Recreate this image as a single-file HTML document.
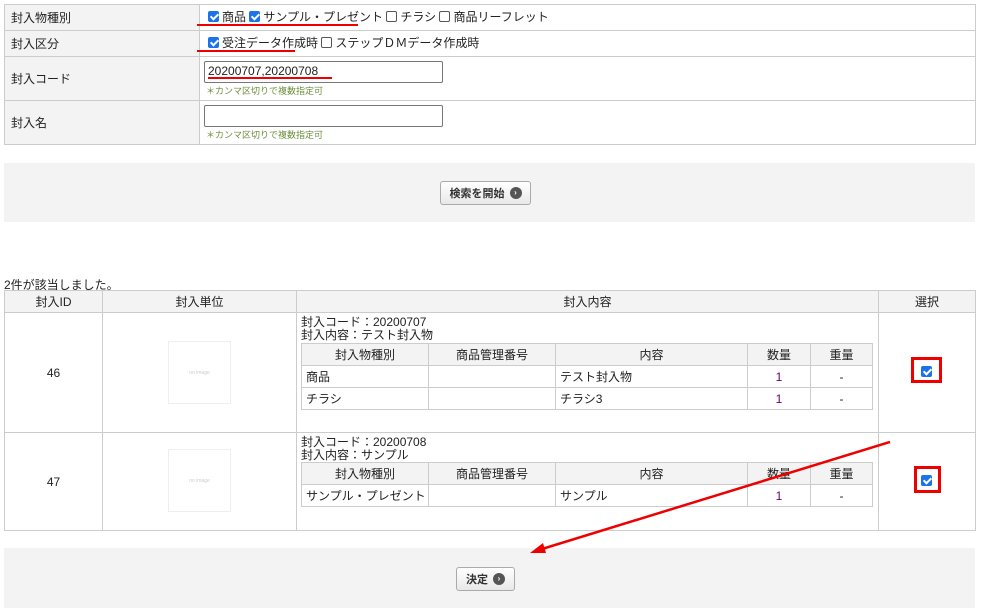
<!DOCTYPE html><html><head><meta charset="utf-8"><style>
*{box-sizing:border-box;margin:0;padding:0}
body{width:981px;height:614px;background:#fff;font-family:"Liberation Sans","Noto Sans CJK JP",sans-serif;font-size:12px;color:#222;position:relative;overflow:hidden}
.a{position:absolute}
.lbl{background:#f3f3f3;border:1px solid #ccc}
.cell{border:1px solid #ccc}
.cb{display:inline-block;width:11px;height:11px;border:1px solid #555;border-radius:2px;vertical-align:-1px;margin-right:3px;background:#fff}
.cb.on{background:#1a73e8;border-color:#1a73e8;position:relative}
.cb.on:after{content:"";position:absolute;left:3px;top:0px;width:3px;height:6px;border:solid #fff;border-width:0 2px 2px 0;transform:rotate(45deg)}
.note{color:#6b8e3a;font-size:9px}
.btn{border:1px solid #aaa;border-radius:3px;background:linear-gradient(#fff,#e8e8e8);font-size:11px;display:flex;align-items:center;justify-content:center;gap:5px;font-weight:bold;color:#333}
.ic{width:12px;height:12px;border-radius:50%;background:#555;color:#fff;font-size:8px;line-height:12px;text-align:center}
table{border-collapse:collapse;position:absolute;font-size:12px}
table.f{table-layout:fixed}
td{border:1px solid #ccc;height:22px;padding:0 4px;white-space:nowrap;overflow:hidden}
th{border:1px solid #ccc;background:#f3f3f3;font-weight:normal;height:22px}
.c{text-align:center}
.n{color:#606}
.ph{border:1px solid #eee;font-size:5px;color:#ccc;text-align:center;display:flex;align-items:center;justify-content:center}
</style></head><body>
<div class="a lbl" style="left:4px;top:4px;width:196px;height:27px;padding:4px 6px">封入物種別</div>
<div class="a cell" style="left:199px;top:4px;width:777px;height:27px;padding:3px 8px"><span class="cb on"></span>商品 <span class="cb on"></span>サンプル・プレゼント <span class="cb"></span>チラシ <span class="cb"></span>商品リーフレット</div>
<div class="a lbl" style="left:4px;top:30px;width:196px;height:27px;padding:4px 6px">封入区分</div>
<div class="a cell" style="left:199px;top:30px;width:777px;height:27px;padding:3px 8px"><span class="cb on"></span>受注データ作成時 <span class="cb"></span>ステップＤＭデータ作成時</div>
<div class="a lbl" style="left:4px;top:56px;width:196px;height:45px;padding:13px 6px">封入コード</div>
<div class="a cell" style="left:199px;top:56px;width:777px;height:45px"></div>
<div class="a" style="left:204px;top:61px;width:239px;height:22px;border:1px solid #777;border-radius:2px;padding:2px 3px;font-size:12px">20200707,20200708</div>
<div class="a note" style="left:206px;top:84px">＊カンマ区切りで複数指定可</div>
<div class="a lbl" style="left:4px;top:100px;width:196px;height:45px;padding:13px 6px">封入名</div>
<div class="a cell" style="left:199px;top:100px;width:777px;height:45px"></div>
<div class="a" style="left:204px;top:105px;width:239px;height:22px;border:1px solid #777;border-radius:2px"></div>
<div class="a note" style="left:206px;top:128px">＊カンマ区切りで複数指定可</div>
<div class="a" style="left:197px;top:24px;width:161px;height:2px;background:#e00"></div>
<div class="a" style="left:197px;top:50px;width:98px;height:2px;background:#e00"></div>
<div class="a" style="left:208px;top:77px;width:124px;height:2px;background:#e00"></div>

<div class="a" style="left:4px;top:163px;width:971px;height:59px;background:#f3f3f3"></div>
<div class="a btn" style="left:440px;top:181px;width:91px;height:24px">検索を開始<span class="ic">›</span></div>

<div class="a" style="left:4px;top:276px">2件が該当しました。</div>
<table style="left:4px;top:290px;width:972px">
<tr><th style="width:98px">封入ID</th><th style="width:194px">封入単位</th><th style="width:582px">封入内容</th><th>選択</th></tr>
<tr><td class="c" style="height:120px">46</td><td></td><td></td><td></td></tr>
<tr><td class="c" style="height:98px">47</td><td></td><td></td><td></td></tr>
</table>
<div class="a ph" style="left:168px;top:341px;width:63px;height:63px">no image</div>
<div class="a ph" style="left:168px;top:449px;width:63px;height:63px">no image</div>
<div class="a" style="left:301px;top:316px;line-height:13px">封入コード：20200707<br>封入内容：テスト封入物</div>
<table class="f" style="left:301px;top:343px;width:572px">
<tr><th style="width:127px">封入物種別</th><th style="width:127px">商品管理番号</th><th style="width:192px">内容</th><th style="width:63px">数量</th><th>重量</th></tr>
<tr><td>商品</td><td></td><td>テスト封入物</td><td class="c n">1</td><td class="c">-</td></tr>
<tr><td>チラシ</td><td></td><td>チラシ3</td><td class="c n">1</td><td class="c">-</td></tr>
</table>
<div class="a" style="left:301px;top:436px;line-height:13px">封入コード：20200708<br>封入内容：サンプル</div>
<table class="f" style="left:301px;top:462px;width:572px">
<tr><th style="width:127px">封入物種別</th><th style="width:127px">商品管理番号</th><th style="width:192px">内容</th><th style="width:63px">数量</th><th>重量</th></tr>
<tr><td>サンプル・プレゼント</td><td></td><td>サンプル</td><td class="c n">1</td><td class="c">-</td></tr>
</table>
<div class="a" style="left:911px;top:357px;width:31px;height:26px;border:3px solid #e00"></div>
<div class="a" style="left:921px;top:365px"><span class="cb on"></span></div>
<div class="a" style="left:914px;top:466px;width:27px;height:27px;border:3px solid #e00"></div>
<div class="a" style="left:921px;top:474px"><span class="cb on"></span></div>

<div class="a" style="left:4px;top:548px;width:971px;height:60px;background:#f3f3f3"></div>
<div class="a btn" style="left:456px;top:567px;width:59px;height:24px">決定<span class="ic">›</span></div>
<svg class="a" style="left:0;top:0" width="981" height="614"><line x1="890" y1="442" x2="542" y2="549" stroke="#e00" stroke-width="2.5"/><polygon points="530,553 543,543 546,553" fill="#e00"/></svg>
</body></html>
